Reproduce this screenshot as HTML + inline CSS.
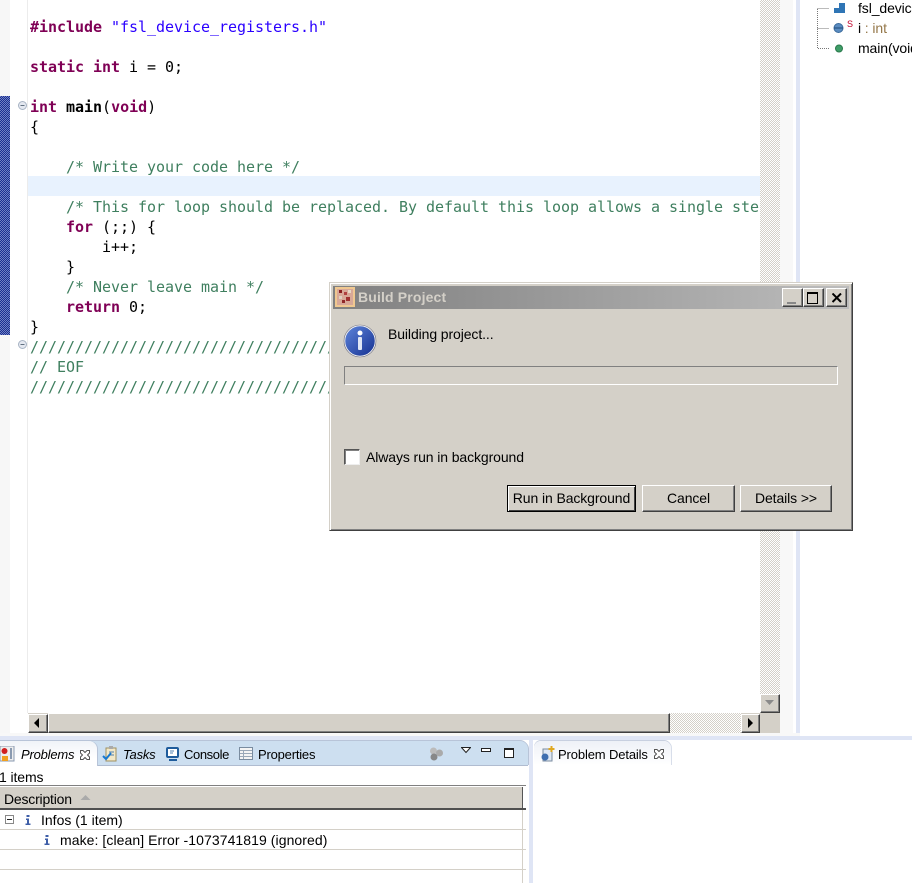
<!DOCTYPE html>
<html><head><meta charset="utf-8">
<style>
html,body{margin:0;padding:0;background:#fff}
#r{position:relative;width:912px;height:883px;overflow:hidden;background:#fff;font-family:"Liberation Sans",sans-serif;font-size:14px;color:#000}
#r div,#r svg,#r span.a{position:absolute}
.c{font-family:"DejaVu Sans Mono",monospace;font-size:15px;line-height:20px;height:20px;left:30px;white-space:pre;color:#000;letter-spacing:-.03px}
.k{color:#7f0055;font-weight:bold}.s{color:#2a00ff}.g{color:#3f7f5f}.b{font-weight:bold}
.hatch{background:repeating-conic-gradient(#d4d0c8 0 25%,#fff 0 50%) 0 0/2px 2px}
.btn{background:#d4d0c8;box-sizing:border-box;border:1px solid;border-color:#fff #404040 #404040 #fff;box-shadow:inset -1px -1px 0 #808080}
.t{white-space:nowrap;line-height:18px;height:18px;letter-spacing:-.1px}
.tb{font-size:13px;letter-spacing:-.2px}
</style></head><body><div id="r">

<!-- editor -->
<div style="left:0;top:0;width:10px;height:733px;background:#f7f7f7"></div>
<div style="left:27px;top:0;width:1px;height:713px;background:#ececec"></div>
<div style="left:0;top:96px;width:10px;height:239px;background:repeating-conic-gradient(#1a2f90 0 25%,#6f80c4 0 50%) 0 0/2px 2px"></div>
<div style="left:28px;top:176px;width:732px;height:20px;background:#e8f2fe"></div>

<div class="c" style="top:17px"><span class="k">#include</span> <span class="s">"fsl_device_registers.h"</span></div>
<div class="c" style="top:57px"><span class="k">static</span> <span class="k">int</span> i = 0;</div>
<div class="c" style="top:97px"><span class="k">int</span> <span class="b">main</span>(<span class="k">void</span>)</div>
<div class="c" style="top:117px">{</div>
<div class="c g" style="top:157px">    /* Write your code here */</div>
<div class="c g" style="top:197px;width:729px;overflow:hidden">    /* This for loop should be replaced. By default this loop allows a single stepping</div>
<div class="c" style="top:217px">    <span class="k">for</span> (;;) {</div>
<div class="c" style="top:237px">        i++;</div>
<div class="c" style="top:257px">    }</div>
<div class="c g" style="top:277px">    /* Never leave main */</div>
<div class="c" style="top:297px">    <span class="k">return</span> 0;</div>
<div class="c" style="top:317px">}</div>
<div class="c g" style="top:337px;width:300px;overflow:hidden">////////////////////////////////////////</div>
<div class="c g" style="top:357px">// EOF</div>
<div class="c g" style="top:377px;width:300px;overflow:hidden">////////////////////////////////////////</div>

<svg style="left:18px;top:101px" width="10" height="10"><circle cx="4.500" cy="4.500" r="4" fill="#e4e8f0" stroke="#a8b4c4"/><path d="M2.500 4.500h4" stroke="#607080"/></svg>
<svg style="left:18px;top:340px" width="10" height="10"><circle cx="4.500" cy="4.500" r="4" fill="#e4e8f0" stroke="#a8b4c4"/><path d="M2.500 4.500h4" stroke="#607080"/></svg>

<!-- overview right -->
<div class="hatch" style="left:760px;top:0;width:20px;height:694px"></div>
<div style="left:780px;top:0;width:13px;height:733px;background:#f8f8f8"></div>
<div style="left:796px;top:0;width:4px;height:737px;background:#dfe5f5"></div>
<div class="btn" style="left:760px;top:694px;width:20px;height:19px"></div>
<svg style="left:764px;top:699px" width="12" height="8"><path d="M1 1h9L5.500 6z" fill="#8a8a8a"/></svg>
<div style="left:760px;top:713px;width:20px;height:20px;background:#d4d0c8"></div>

<!-- h scroll -->
<div style="left:28px;top:713px;width:732px;height:20px;background:#d4d0c8"></div>
<div class="btn" style="left:28px;top:714px;width:20px;height:19px"></div>
<svg style="left:33px;top:717px" width="8" height="12"><path d="M6 1v10L1 6z" fill="#000"/></svg>
<div class="btn" style="left:48px;top:713px;width:622px;height:20px"></div>
<div class="hatch" style="left:670px;top:713px;width:71px;height:20px"></div>
<div class="btn" style="left:741px;top:714px;width:19px;height:19px"></div>
<svg style="left:747px;top:717px" width="8" height="12"><path d="M1 1v10L6 6z" fill="#000"/></svg>

<!-- outline -->
<svg style="left:815px;top:0" width="32" height="60"><path d="M2.500 9V48.500H14M2.500 28.500H14M2.500 8.500H14" fill="none" stroke="#777" stroke-dasharray="1 1"/>
<rect x="19" y="3" width="11" height="10" fill="#2f75b5"/><rect x="19" y="3" width="5" height="5" fill="#fff"/>
<circle cx="23.500" cy="28" r="4.500" fill="#5b8cc0" stroke="#3a6a9c"/><path d="M19 28h9" stroke="#1e4a7a"/>
<circle cx="24" cy="48.500" r="3.500" fill="#3f9d68" stroke="#2a7a4c"/></svg>
<div style="left:847px;top:19px;font-size:9px;color:#c0002a;line-height:10px">S</div>
<div class="t" style="left:858px;top:-1px">fsl_device_registers.h</div>
<div class="t" style="left:858px;top:19px"><span style="color:#000">i</span><span style="color:#95784a"> : int</span></div>
<div class="t" style="left:858px;top:39px">main(void) : int</div>

<!-- bottom stripes -->
<div style="left:0;top:733px;width:800px;height:3px;background:#f8f8f8"></div>
<div style="left:0;top:736px;width:912px;height:4px;background:#dfe5f5"></div>
<div style="left:529px;top:740px;width:4px;height:143px;background:#dfe5f5"></div>

<!-- problems tabs -->
<div style="left:0;top:740px;width:529px;height:143px;background:#fff"></div>
<div style="left:0;top:741px;width:528px;height:24px;background:#cddff0;border-radius:0 8px 0 0;box-shadow:0 -1px 0 #b8c4d8,1px 0 0 #b8c4d8,0 1px 0 #b0bcd0"></div>
<div style="left:0;top:741px;width:97px;height:25px;background:linear-gradient(#f0f3f8,#fff 70%);border-radius:0 8px 0 0;box-shadow:1px 0 0 #b8c4d8"></div>
<svg style="left:0;top:746px" width="15" height="16"><rect x="0" y="0" width="14" height="15" fill="#eee" stroke="#8a9ab0"/><circle cx="4.500" cy="5" r="3" fill="#d02020"/><rect x="2" y="10" width="6" height="5" fill="#f0a020"/><path d="M11 2v11" stroke="#8a9ab0" stroke-width="2"/></svg>
<div class="t tb" style="left:21px;top:746px;font-style:italic">Problems</div>
<svg style="left:79px;top:749px" width="12" height="12"><path d="M1.500 1.500h2.500l2 2 2-2h2.500v2.500l-2 2 2 2v2.500h-2.500l-2-2-2 2h-2.500v-2.500l2-2-2-2z" fill="#fff" stroke="#555"/></svg>
<svg style="left:102px;top:746px" width="16" height="16"><rect x="4" y="2" width="10" height="13" fill="#f2e8c8" stroke="#a09060"/><rect x="7" y="0" width="4" height="3" fill="#aaa"/><path d="M7 6h5M7 9h5" stroke="#5080b0"/><path d="M1 10l3 3 5-6" fill="none" stroke="#1878d0" stroke-width="2"/></svg>
<div class="t tb" style="left:123px;top:746px;font-style:italic">Tasks</div>
<svg style="left:166px;top:747px" width="14" height="14"><rect x="1" y="1" width="11" height="9" rx="1" fill="#fff" stroke="#1f5c9c" stroke-width="2"/><path d="M3 13h8" stroke="#1f5c9c" stroke-width="2"/><path d="M4 4h4M4 6h3" stroke="#5080b0"/></svg>
<div class="t tb" style="left:184px;top:746px;letter-spacing:-.4px">Console</div>
<svg style="left:239px;top:747px" width="14" height="13"><rect x=".5" y=".5" width="13" height="12" fill="#f4f4f4" stroke="#7a8ca0"/><path d="M1 3.500h12M1 6.500h12M1 9.500h12M4.500 3v9" stroke="#9aa8b8"/></svg>
<div class="t tb" style="left:258px;top:746px">Properties</div>
<svg style="left:429px;top:746px" width="15" height="15"><circle cx="4.500" cy="5" r="3.500" fill="#bbb"/><circle cx="10.500" cy="7" r="3.500" fill="#aaa"/><circle cx="5" cy="11" r="3.500" fill="#888"/></svg>
<svg style="left:461px;top:747px" width="10" height="7"><path d="M.5.500h9l-4.500 5z" fill="#fff" stroke="#222"/></svg>
<div style="left:481px;top:748px;width:8px;height:2px;border:1px solid #222;background:#fff"></div>
<div style="left:504px;top:748px;width:8px;height:7px;border:1px solid #222;border-top-width:2px;background:#fff"></div>

<div class="t" style="left:-1px;top:768px">1 items</div>
<div style="left:0;top:785px;width:526px;height:1px;background:#808080"></div>
<div style="left:0;top:787px;width:523px;height:21px;background:#d4d0c8"></div>
<div style="left:522px;top:787px;width:1px;height:21px;background:#555"></div>
<div style="left:0;top:808px;width:526px;height:2px;background:#505050"></div>
<div class="t" style="left:4px;top:790px;letter-spacing:-.2px">Description</div>
<svg style="left:80px;top:794px" width="11" height="7"><path d="M.5 6L5.500 1l5 5z" fill="#aaa"/></svg>
<div style="left:0;top:829px;width:526px;height:1px;background:#d4d0c8"></div>
<div style="left:0;top:849px;width:526px;height:1px;background:#d4d0c8"></div>
<div style="left:0;top:869px;width:526px;height:1px;background:#d4d0c8"></div>
<div style="left:522px;top:810px;width:1px;height:73px;background:#d4d0c8"></div>
<svg style="left:5px;top:815px" width="10" height="10"><rect x=".5" y=".5" width="8" height="8" fill="#fff" stroke="#888"/><path d="M2 4.500h5" stroke="#222"/></svg>
<svg style="left:25px;top:814px" width="6" height="12"><path d="M1.500 1h3v2h-3zM1 4.500h3v5h1.500v1.500h-5V9.500h1.500V6H1z" fill="#3f5fa8"/></svg>
<div class="t" style="left:41px;top:811px;letter-spacing:0">Infos (1 item)</div>
<svg style="left:44px;top:834px" width="6" height="12"><path d="M1.500 1h3v2h-3zM1 4.500h3v5h1.500v1.500h-5V9.500h1.500V6H1z" fill="#3f5fa8"/></svg>
<div class="t" style="left:60px;top:831px;letter-spacing:.07px">make: [clean] Error -1073741819 (ignored)</div>

<!-- problem details -->
<div style="left:533px;top:740px;width:379px;height:143px;background:#fff"></div>
<div style="left:534px;top:741px;width:137px;height:24px;background:linear-gradient(#eef1f7,#fff);border-radius:7px 7px 0 0;box-shadow:0 -1px 0 #c8d0e0,1px 0 0 #d8deea"></div>
<svg style="left:539px;top:746px" width="16" height="16"><rect x="4" y="3" width="9" height="12" fill="#dfe8f4" stroke="#7a8ca0"/><circle cx="6" cy="11" r="3.500" fill="#3f6fb0"/><path d="M12.500 0v6M9.500 3h6" stroke="#e0a820" stroke-width="2"/></svg>
<div class="t tb" style="left:558px;top:746px;letter-spacing:-.13px">Problem Details</div>
<svg style="left:653px;top:748px" width="12" height="12"><path d="M1.500 1.500h2.500l2 2 2-2h2.500v2.500l-2 2 2 2v2.500h-2.500l-2-2-2 2h-2.500v-2.500l2-2-2-2z" fill="#fff" stroke="#555"/></svg>

<!-- dialog -->
<div style="left:329px;top:282px;width:524px;height:249px;background:#d4d0c8;box-sizing:border-box;border:1px solid;border-color:#d4d0c8 #404040 #404040 #d4d0c8;box-shadow:inset 1px 1px 0 #fff,inset -1px -1px 0 #808080"></div>
<div style="left:333px;top:286px;width:516px;height:23px;background:linear-gradient(90deg,#808080,#bcbcbc)"></div>
<svg style="left:335px;top:287px" width="21" height="21"><rect width="20" height="20" fill="#f0c890"/><rect x="2" y="2" width="16" height="16" fill="#d8a898"/><rect x="4" y="3" width="3" height="3" fill="#8a2020"/><rect x="9" y="5" width="3" height="3" fill="#b04040"/><rect x="13" y="3" width="3" height="3" fill="#e8d8c8"/><rect x="11" y="10" width="4" height="4" fill="#a03030"/><rect x="4" y="9" width="3" height="3" fill="#e0d0c0"/><rect x="7" y="13" width="3" height="3" fill="#902828"/></svg>
<div style="left:358px;top:288px;font-weight:bold;color:#d4d0c8;line-height:19px;white-space:nowrap;letter-spacing:.15px">Build Project</div>
<div class="btn" style="left:782px;top:288px;width:21px;height:19px"></div>
<div style="left:787px;top:302px;width:9px;height:2px;background:#888"></div>
<div class="btn" style="left:803px;top:288px;width:21px;height:19px"></div>
<div style="left:807px;top:292px;width:9px;height:9px;border:1px solid #000;border-top-width:2px"></div>
<div class="btn" style="left:826px;top:288px;width:21px;height:19px"></div>
<svg style="left:832px;top:293px" width="10" height="10"><path d="M.5 .5l8.500 8.500M9 .5L.5 9" fill="none" stroke="#000" stroke-width="2"/></svg>

<svg style="left:343px;top:324px" width="34" height="34"><defs><linearGradient id="ig" x1="0" y1="0" x2="1" y2="1"><stop offset="0" stop-color="#5f86dc"/><stop offset="1" stop-color="#142f8f"/></linearGradient></defs><circle cx="17" cy="17" r="15.500" fill="url(#ig)" stroke="#f0f0f0" stroke-width="1.500"/><circle cx="17" cy="17" r="16" fill="none" stroke="#667" stroke-width=".6"/><circle cx="17" cy="9" r="2.500" fill="#fff"/><rect x="15" y="13" width="4" height="13" rx="1" fill="#dfe6f5"/></svg>
<div class="t" style="left:388px;top:325px">Building project...</div>
<div style="left:344px;top:366px;width:494px;height:19px;box-sizing:border-box;border:1px solid;border-color:#808080 #fff #fff #808080"></div>

<div style="left:344px;top:449px;width:16px;height:16px;box-sizing:border-box;background:#fff;border:1px solid;border-color:#555 #eee #eee #555;box-shadow:inset 1px 1px 0 #808080"></div>
<div class="t" style="left:366px;top:448px">Always run in background</div>

<div style="left:507px;top:485px;width:129px;height:27px;box-sizing:border-box;border:1px solid #000;background:#d4d0c8;box-shadow:inset 1px 1px 0 #fff,inset -1px -1px 0 #404040"></div>
<div class="t" style="left:507px;top:489px;width:129px;text-align:center">Run in Background</div>
<div class="btn" style="left:642px;top:485px;width:93px;height:27px"></div>
<div class="t" style="left:642px;top:489px;width:93px;text-align:center">Cancel</div>
<div class="btn" style="left:740px;top:485px;width:92px;height:27px"></div>
<div class="t" style="left:740px;top:489px;width:92px;text-align:center">Details &gt;&gt;</div>

</div></body></html>
